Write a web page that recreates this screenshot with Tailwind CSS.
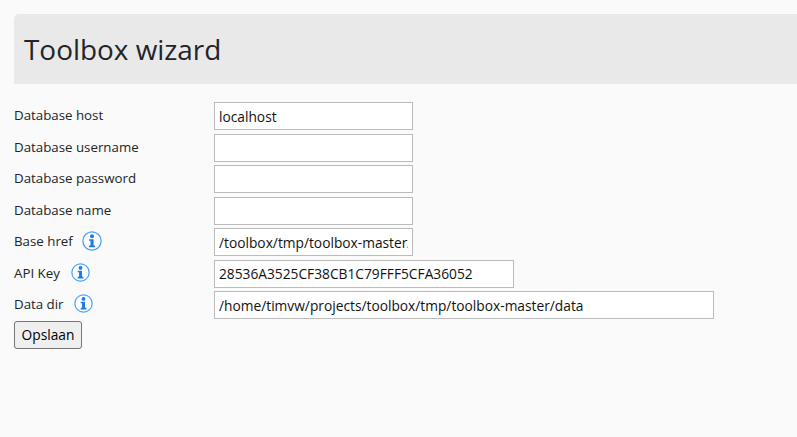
<!DOCTYPE html>
<html lang="en">
<head>
  <meta charset="UTF-8" />
  <title>Toolbox wizard</title>
  <script src="https://cdn.jsdelivr.net/npm/@tailwindcss/browser@4"></script>
</head>
<body class="bg-[#fafafa] min-h-screen overflow-hidden font-['Open_Sans','Noto_Sans',sans-serif] text-[13.3px] text-[#212529]">
  <div class="pt-[14px] pl-[14px]">
    <div class="h-[70px] bg-[#e9e9e9] rounded-tl-[5px] flex items-center pl-[10px] pt-[2px] mb-[18px]">
      <h1 class="text-[27.9px] leading-none text-[#212529]">Toolbox wizard</h1>
    </div>

    <form class="flex flex-col">
      <div class="flex h-[31.55px]">
        <label class="w-[200px] pt-[4px]">Database host</label>
        <input type="text" value="localhost" class="w-[199px] h-[28px] px-[4px] border border-[#bbb] bg-white text-[13.76px] text-[#111]" />
      </div>
      <div class="flex h-[31.55px]">
        <label class="w-[200px] pt-[4px]">Database username</label>
        <input type="text" class="w-[199px] h-[28px] px-[4px] border border-[#bbb] bg-white text-[13.76px] text-[#111]" />
      </div>
      <div class="flex h-[31.55px]">
        <label class="w-[200px] pt-[4px]">Database password</label>
        <input type="text" class="w-[199px] h-[28px] px-[4px] border border-[#bbb] bg-white text-[13.76px] text-[#111]" />
      </div>
      <div class="flex h-[31.55px]">
        <label class="w-[200px] pt-[4px]">Database name</label>
        <input type="text" class="w-[199px] h-[28px] px-[4px] border border-[#bbb] bg-white text-[13.76px] text-[#111]" />
      </div>
      <div class="flex h-[31.55px]">
        <label class="w-[200px] flex items-start gap-[9px] pt-[4px]">Base href
          <svg class="w-[20px] h-[20px] -mt-[1px]" viewBox="0 0 20 20"><circle cx="10" cy="10" r="9.1" fill="#fff" stroke="#4aa3ff" stroke-width="1.3"/><circle cx="10" cy="5.2" r="2" fill="#1a7ae6"/><path d="M7 8.2h4.6v6.4h1.5v1.6H7v-1.6h1.5V9.8H7z" fill="#1a7ae6"/></svg>
        </label>
        <input type="text" value="/toolbox/tmp/toolbox-master/" class="w-[199px] h-[28px] px-[4px] border border-[#bbb] bg-white text-[13.76px] text-[#111]" />
      </div>
      <div class="flex h-[31.55px]">
        <label class="w-[200px] flex items-start gap-[11px] pt-[4px]">API Key
          <svg class="w-[19px] h-[19px] -mt-[1px]" viewBox="0 0 20 20"><circle cx="10" cy="10" r="9.1" fill="#fff" stroke="#4aa3ff" stroke-width="1.3"/><circle cx="10" cy="5.2" r="2" fill="#1a7ae6"/><path d="M7 8.2h4.6v6.4h1.5v1.6H7v-1.6h1.5V9.8H7z" fill="#1a7ae6"/></svg>
        </label>
        <input type="text" value="28536A3525CF38CB1C79FFF5CFA36052" class="w-[300px] h-[28px] px-[4px] border border-[#bbb] bg-white text-[13.76px] text-[#111]" />
      </div>
      <div class="flex h-[30px]">
        <label class="w-[200px] flex items-start gap-[10px] pt-[4px]">Data dir
          <svg class="w-[19px] h-[19px] -mt-[1px]" viewBox="0 0 20 20"><circle cx="10" cy="10" r="9.1" fill="#fff" stroke="#4aa3ff" stroke-width="1.3"/><circle cx="10" cy="5.2" r="2" fill="#1a7ae6"/><path d="M7 8.2h4.6v6.4h1.5v1.6H7v-1.6h1.5V9.8H7z" fill="#1a7ae6"/></svg>
        </label>
        <input type="text" value="/home/timvw/projects/toolbox/tmp/toolbox-master/data" class="w-[500px] h-[28px] px-[4px] border border-[#bbb] bg-white text-[13.76px] text-[#111]" />
      </div>
      <div>
        <button type="button" class="w-[68px] h-[28px] bg-[#efefef] border border-[#767676] rounded-[3px] text-[13.76px] text-black">Opslaan</button>
      </div>
    </form>
  </div>
</body>
</html>
